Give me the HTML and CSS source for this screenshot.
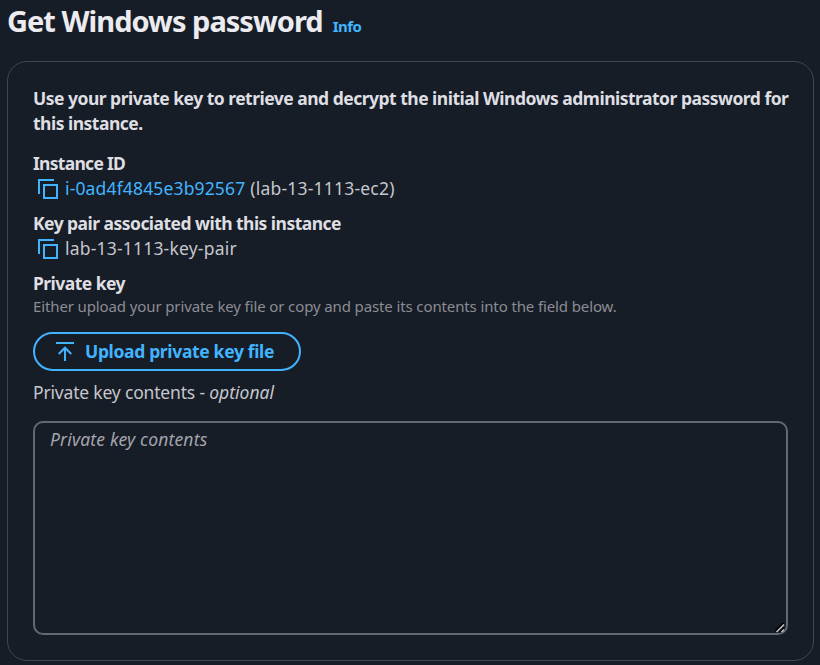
FILE: index.html
```html
<!DOCTYPE html>
<html lang="en">
<head>
<meta charset="utf-8">
<title>Get Windows password</title>
<link rel="stylesheet" href="styles.css">
</head>
<body>
<header class="header">
  <h1 class="title">Get Windows password</h1>
  <a class="info">Info</a>
</header>
<main class="card">
  <p class="intro">Use your private key to retrieve and decrypt the initial Windows administrator password for this instance.</p>
  <section class="field">
    <h2 class="label label-id">Instance ID</h2>
    <div class="value">
      <svg class="copy" viewBox="0 0 20 20"><path d="M1 15V1h15"/><path d="M6 6h13v13H6z"/></svg>
      <a class="link">i-0ad4f4845e3b92567</a>
      <span class="name">(lab-13-1113-ec2)</span>
    </div>
  </section>
  <section class="field">
    <h2 class="label">Key pair associated with this instance</h2>
    <div class="value">
      <svg class="copy" viewBox="0 0 20 20"><path d="M1 15V1h15"/><path d="M6 6h13v13H6z"/></svg>
      <span class="keypair">lab-13-1113-key-pair</span>
    </div>
  </section>
  <section class="field field-key">
    <h2 class="label">Private key</h2>
    <p class="hint">Either upload your private key file or copy and paste its contents into the field below.</p>
    <button class="upload" type="button">
      <svg class="arrow" viewBox="0 0 18 19"><path d="M0 1h18M9 19V6M2.700 12 9 5.700l6.300 6.300"/></svg>
      <span>Upload private key file</span>
    </button>
  </section>
  <label class="contents-label" for="contents">Private key contents - <em>optional</em></label>
  <div class="box">
    <textarea class="contents" id="contents" placeholder="Private key contents"></textarea>
    <svg class="grip" viewBox="0 0 11 11"><path class="grip-shade" d="M.5 9 8.500 1M5 10l4-4"/><path class="grip-line" d="M1.500 10 9 2.500M6.500 10 9 7.500"/></svg>
  </div>
</main>
</body>
</html>
```
FILE: styles.css
```css
* { box-sizing: border-box; }
body {
  margin: 0;
  height: 665px;
  overflow: hidden;
  background: #161d26;
  color: #c6c6cd;
  font: 17.5px/25px "Noto Sans", "Open Sans", sans-serif;
}
h1, h2, p { margin: 0; }
.header {
  display: flex;
  align-items: baseline;
  gap: 10px;
  height: 61px;
  padding: 2px 0 0 7px;
}
.title {
  color: #ebebf0;
  font-size: 29px;
  font-weight: 700;
  line-height: 38px;
  letter-spacing: -0.98px;
  white-space: nowrap;
}
.info {
  color: #42b4ff;
  font-size: 15px;
  font-weight: 700;
  line-height: 20px;
  letter-spacing: -0.5px;
}
.card {
  width: 807px;
  height: 600px;
  margin-left: 7px;
  padding: 24px 25px 0;
  border: 1px solid #424650;
  border-radius: 20px;
}
.intro {
  margin: 0 -8px 15px 0;
  color: #dedee3;
  font-weight: 700;
  letter-spacing: -0.51px;
}
.field { margin-bottom: 10px; }
.field-key { margin-bottom: 9px; }
.label {
  color: #dedee3;
  font-size: 17.5px;
  font-weight: 700;
  letter-spacing: -0.54px;
}
.label-id { letter-spacing: -0.72px; }
.value {
  display: flex;
  align-items: flex-start;
  padding-left: 5px;
  height: 25px;
  white-space: nowrap;
}
.copy {
  width: 20px;
  height: 20px;
  margin: 3px 7px 0 0;
  fill: none;
  stroke: #42b4ff;
  stroke-width: 2;
}
.link { color: #42b4ff; margin-right: 5px; letter-spacing: 0.15px; }
.name { letter-spacing: 0.2px; }
.keypair { letter-spacing: 0.2px; }
.hint {
  color: #8c8c94;
  font-size: 15px;
  line-height: 20px;
  letter-spacing: -0.12px;
  white-space: nowrap;
}
.upload {
  display: flex;
  align-items: center;
  width: 268px;
  height: 39px;
  margin-top: 16px;
  padding: 0 0 1px 21px;
  border: 2px solid #42b4ff;
  border-radius: 20px;
  background: none;
  color: #42b4ff;
  font: 700 17.5px/25px "Noto Sans", "Open Sans", sans-serif;
  letter-spacing: -0.34px;
}
.arrow {
  width: 18px;
  height: 19px;
  margin-right: 11px;
  fill: none;
  stroke: currentColor;
  stroke-width: 2;
}
.contents-label {
  display: block;
  margin-bottom: 16px;
  letter-spacing: -0.18px;
}
.contents-label em { letter-spacing: 0; }
.box {
  position: relative;
  width: 755px;
  height: 214px;
}
.contents {
  display: block;
  width: 100%;
  height: 100%;
  padding: 4px 15px;
  border: 2px solid #656871;
  border-radius: 10px;
  outline: none;
  resize: none;
  background: #161d26;
  color: #c6c6cd;
  font: 17.5px/25px "Noto Sans", "Open Sans", sans-serif;
}
.contents::placeholder {
  color: #a4a4ad;
  opacity: 1;
  font-style: italic;
  letter-spacing: 0.17px;
}
.grip {
  position: absolute;
  right: 2px;
  bottom: 2px;
  width: 11px;
  height: 11px;
  fill: none;
}
.grip-shade { stroke: #000; stroke-width: 2; }
.grip-line { stroke: #c8c8c8; stroke-width: 1.5; }
```
